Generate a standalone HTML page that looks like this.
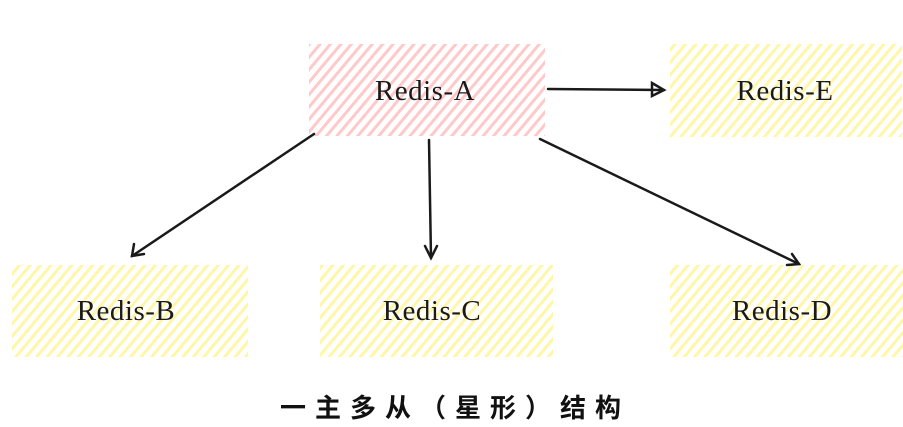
<!DOCTYPE html>
<html><head><meta charset="utf-8"><style>
html,body{margin:0;padding:0;background:#fff;width:903px;height:427px;overflow:hidden}
svg{position:absolute;left:0;top:0}
.t{font-family:"Liberation Serif",serif;font-size:29px;fill:#1a1a1a;letter-spacing:0.5px}
.title{position:absolute;left:280px;top:388px;font-family:"Liberation Sans","Noto Sans CJK SC",sans-serif;font-weight:bold;font-size:26px;letter-spacing:9px;color:#111;white-space:nowrap}
</style></head><body>
<svg width="903" height="427" viewBox="0 0 903 427">
<defs>
<pattern id="pr" width="8" height="8" patternUnits="userSpaceOnUse" patternTransform="rotate(40)">
<rect width="8" height="8" fill="#fff"/><rect width="3" height="8" fill="#ffc9c9"/></pattern>
<pattern id="py" width="8" height="8" patternUnits="userSpaceOnUse" patternTransform="rotate(40)">
<rect width="8" height="8" fill="#fff"/><rect width="3" height="8" fill="#fff6a8"/></pattern>
</defs>
<rect x="309" y="44" width="236" height="92" fill="url(#pr)"/>
<rect x="670" y="44" width="232" height="93" fill="url(#py)"/>
<rect x="12" y="265" width="236" height="92" fill="url(#py)"/>
<rect x="320" y="265" width="233" height="92" fill="url(#py)"/>
<rect x="670" y="265" width="233" height="92" fill="url(#py)"/>
<text class="t" x="425" y="100" text-anchor="middle">Redis-A</text>
<text class="t" x="785" y="100" text-anchor="middle">Redis-E</text>
<text class="t" x="126" y="320" text-anchor="middle">Redis-B</text>
<text class="t" x="432" y="320" text-anchor="middle">Redis-C</text>
<text class="t" x="782" y="320" text-anchor="middle">Redis-D</text>
<g stroke="#1a1a1a" stroke-width="2.5" fill="none" stroke-linecap="round">
<path d="M548 89 L664 90"/><path d="M652 83 L664 90 L652 96 Z"/>
<path d="M314 134 L132 256"/><path d="M134 244 L132 256 L144 254"/>
<path d="M429 140 L431 258"/><path d="M425 246 L431 258 L437 246"/>
<path d="M540 139 L799 264"/><path d="M787 265 L799 264 L792 254"/>
</g>
</svg>
<div class="title">一主多从（星形）结构</div>
</body></html>
